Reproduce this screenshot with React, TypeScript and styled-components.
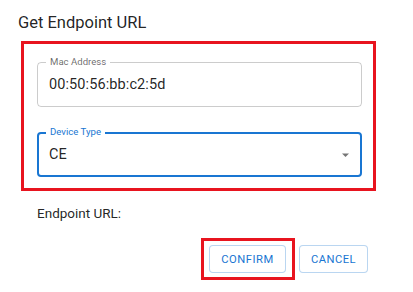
import React, { useState } from 'react';
import styled, { createGlobalStyle } from 'styled-components';

const GlobalStyle = createGlobalStyle`
  html, body {
    margin: 0;
    padding: 0;
    background: #ffffff;
  }
  body {
    font-family: Roboto, "Liberation Sans", Arial, sans-serif;
  }
`;

const Dialog = styled.div`
  width: 413px;
  height: 292px;
  box-sizing: border-box;
  padding-top: 13px;
  display: flex;
  flex-direction: column;
  background: #fff;
`;

const Title = styled.h2`
  margin: 0 0 8px 18px;
  font-size: 16.5px;
  line-height: 20px;
  font-weight: 400;
  color: rgba(0, 0, 0, 0.87);
`;

const Highlight = styled.div`
  border: 3px solid #e8141f;
`;

const FormBox = styled(Highlight)`
  margin-left: 21px;
  width: 355px;
  height: 150px;
  box-sizing: border-box;
  padding: 18px 11px 0 13px;
  display: flex;
  flex-direction: column;
  gap: 25px;
`;

const Field = styled.div<{ $focused?: boolean }>`
  position: relative;
  height: 45px;
  box-sizing: border-box;
  border-radius: 4px;
  border: ${(p) => (p.$focused ? '2px solid #1976d2' : '1px solid rgba(0, 0, 0, 0.2)')};
  padding: 0 ${(p) => (p.$focused ? 10 : 11)}px;
  display: flex;
  align-items: center;
  justify-content: space-between;
`;

const Label = styled.span<{ $focused?: boolean }>`
  position: absolute;
  top: ${(p) => (p.$focused ? -8 : -7)}px;
  left: ${(p) => (p.$focused ? 7 : 8)}px;
  padding: 0 4px;
  background: #fff;
  font-size: 9.6px;
  line-height: 12px;
  color: ${(p) => (p.$focused ? '#1976d2' : 'rgba(0, 0, 0, 0.6)')};
`;

const Value = styled.span`
  font-size: 14.5px;
  color: rgba(0, 0, 0, 0.87);
  letter-spacing: 0.1px;
`;

const Arrow = styled.svg`
  width: 7px;
  height: 4px;
  margin-right: 1px;
  fill: rgba(0, 0, 0, 0.54);
`;

const ResultText = styled.div`
  margin: 13px 0 0 37px;
  font-size: 13.5px;
  line-height: 18px;
  color: rgba(0, 0, 0, 0.87);
`;

const Actions = styled.div`
  margin: 16px 45px 0 0;
  display: flex;
  justify-content: flex-end;
  align-items: center;
  gap: 4px;
`;

const ButtonFrame = styled(Highlight)`
  padding: 4px 6px 4px 5px;
  display: flex;
`;

const OutlineButton = styled.button<{ $width: number }>`
  width: ${(p) => p.$width}px;
  height: 28px;
  box-sizing: border-box;
  border: 1px solid rgba(25, 118, 210, 0.3);
  border-radius: 4px;
  background: #fff;
  color: #1976d2;
  font-family: Roboto, "Liberation Sans", Arial, sans-serif;
  font-size: 11.2px;
  font-weight: 400;
  letter-spacing: 0.5px;
  text-transform: uppercase;
  padding: 0;
  cursor: pointer;
`;

export default function App() {
  const [mac] = useState('00:50:56:bb:c2:5d');
  const [deviceType] = useState('CE');

  return (
    <>
      <GlobalStyle />
      <Dialog>
        <Title>Get Endpoint URL</Title>
        <FormBox>
          <Field>
            <Label>Mac Address</Label>
            <Value>{mac}</Value>
          </Field>
          <Field $focused>
            <Label $focused>Device Type</Label>
            <Value>{deviceType}</Value>
            <Arrow viewBox="0 0 7 4">
              <path d="M0 0.5 L3.5 4 L7 0.5 Z" />
            </Arrow>
          </Field>
        </FormBox>
        <ResultText>Endpoint URL:</ResultText>
        <Actions>
          <ButtonFrame>
            <OutlineButton $width={77}>Confirm</OutlineButton>
          </ButtonFrame>
          <OutlineButton $width={69}>Cancel</OutlineButton>
        </Actions>
      </Dialog>
    </>
  );
}
